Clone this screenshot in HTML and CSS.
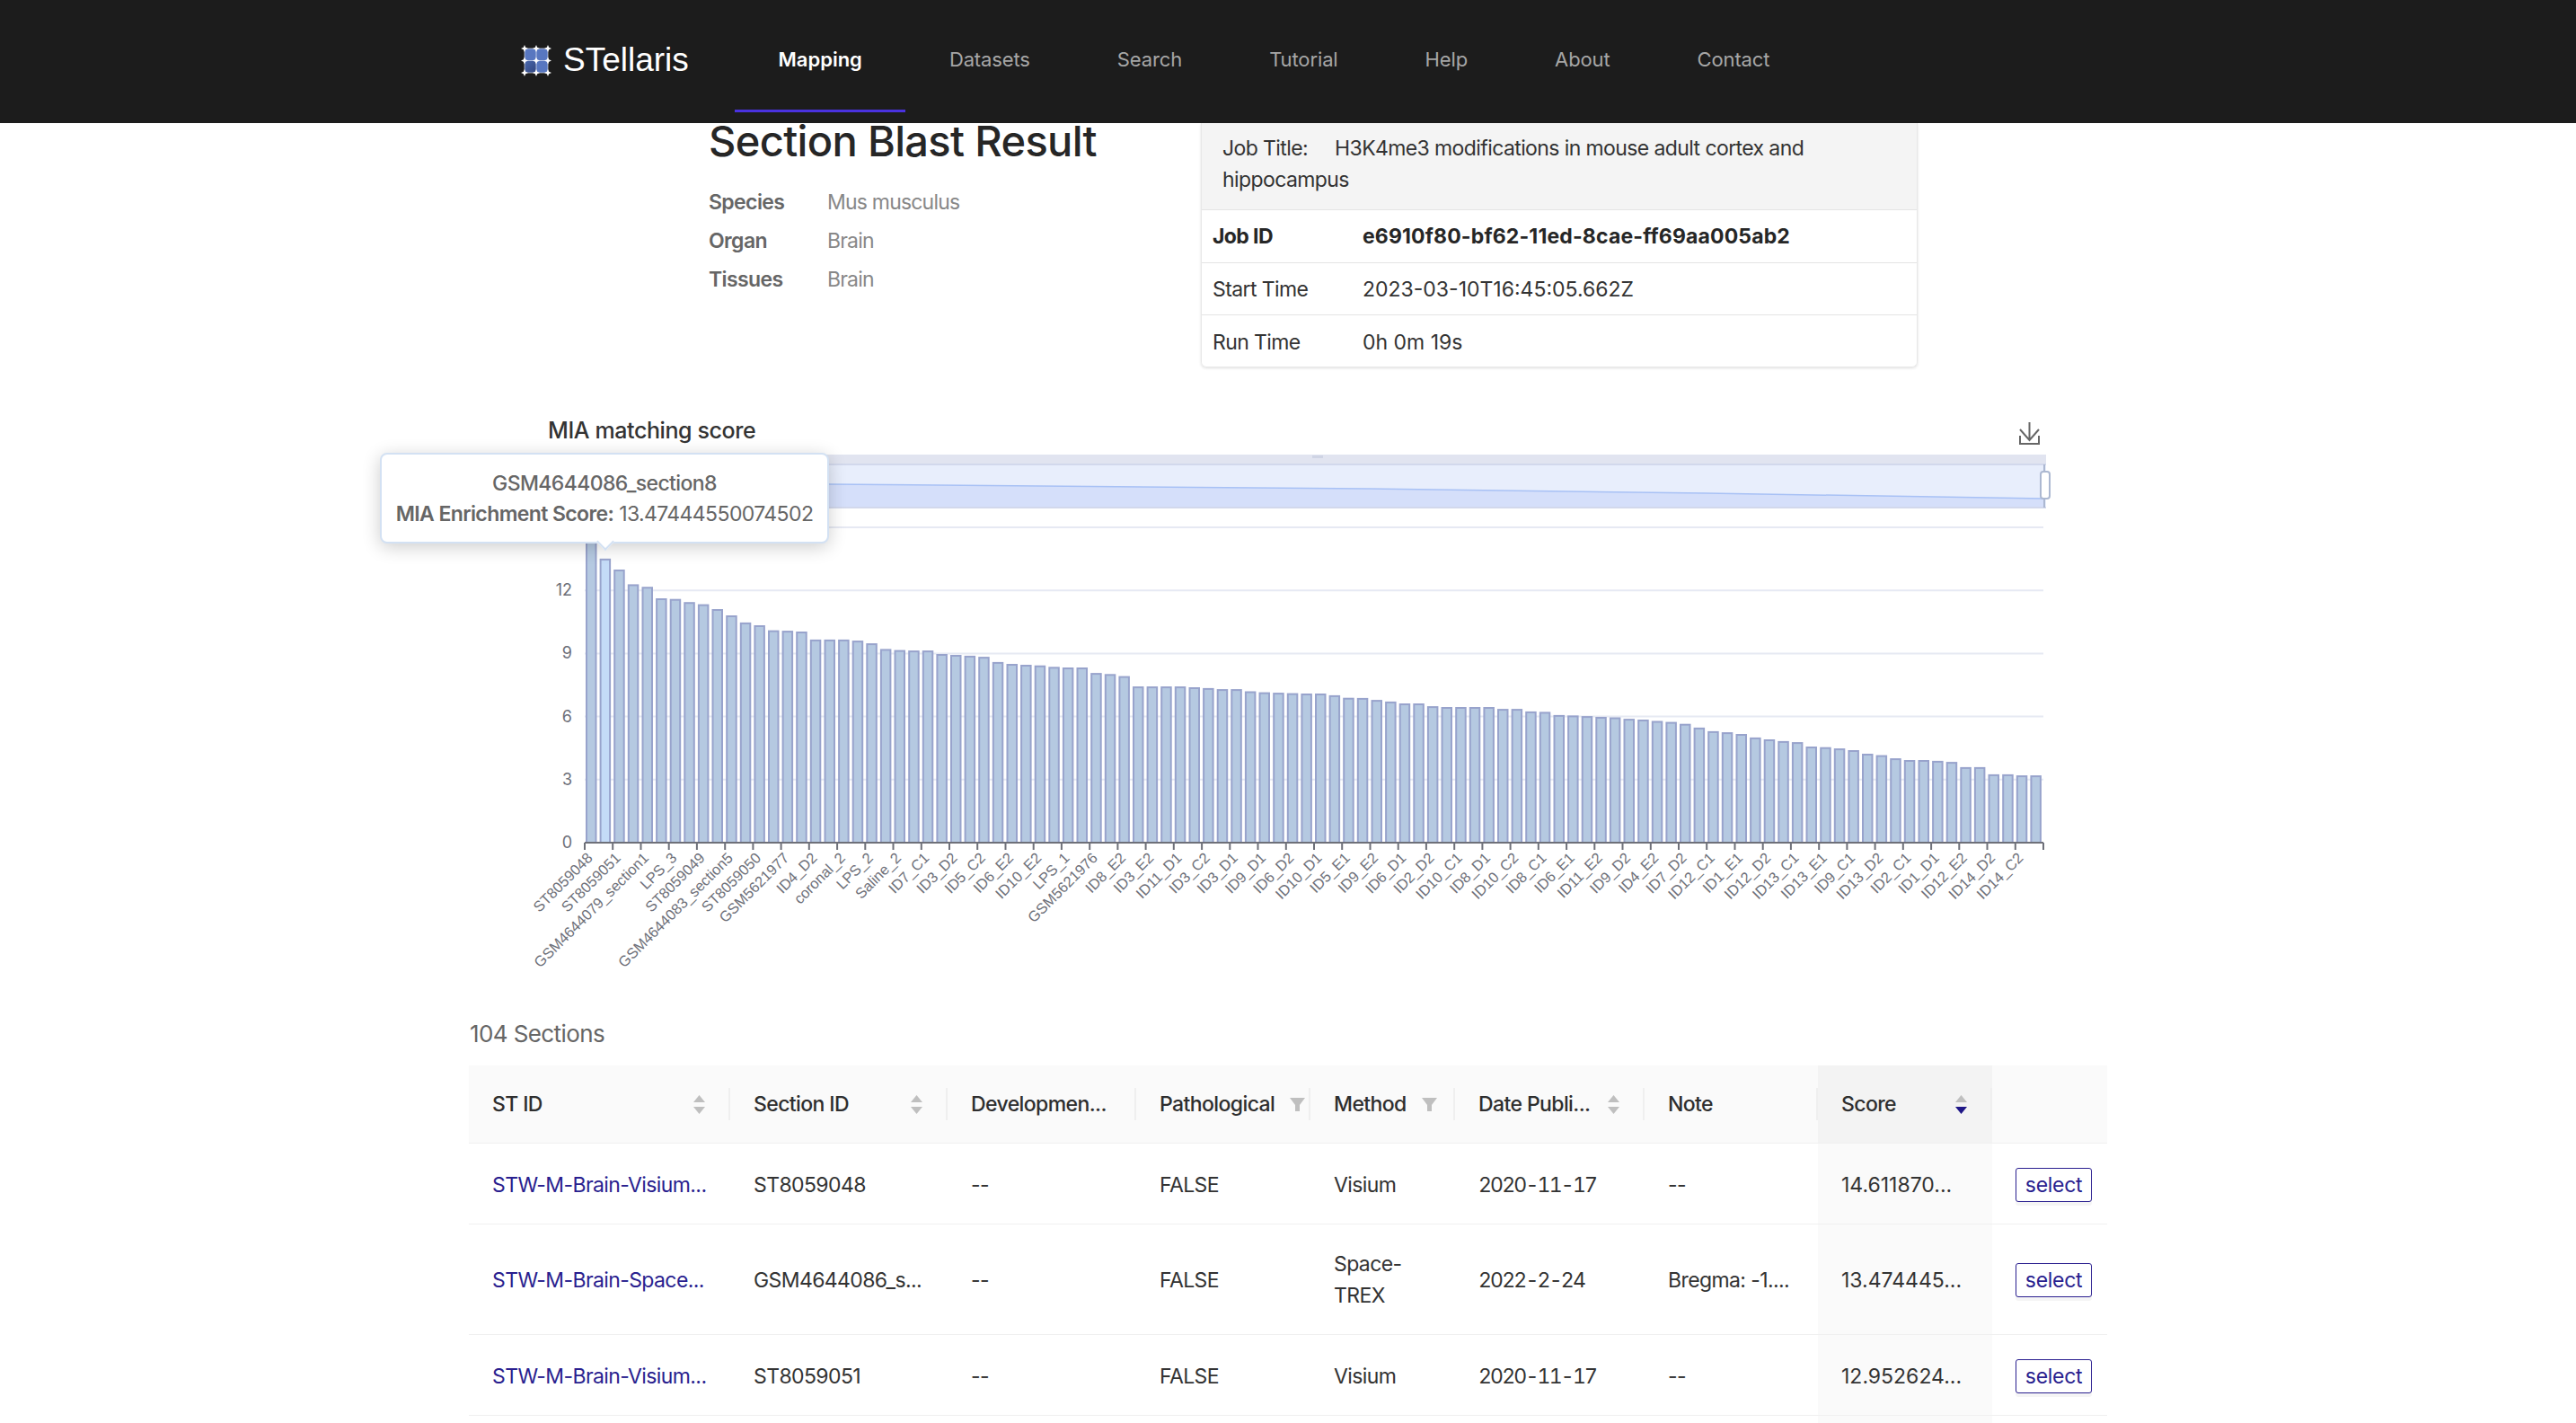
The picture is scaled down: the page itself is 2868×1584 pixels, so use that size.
FILE: index.html
```html
<!DOCTYPE html>
<html lang="en">
  <head>
    <meta charset="UTF-8" />
    <title>STellaris - Section Blast Result</title>
    <link rel="stylesheet" href="styles.css">
  </head>
  <body>
    <nav class="topbar">
      <a class="brand" href="#">
        <svg class="brand-logo" viewBox="0 0 36 36" width="36" height="36">
          <defs>
            <linearGradient id="logo-dark" x1="0" y1="0" x2="1" y2="1">
              <stop offset="0" stop-color="#4a68ad" />
              <stop offset="1" stop-color="#32467f" />
            </linearGradient>
          </defs>
          <rect class="logo-cell" x="5" y="5" width="26" height="27" />
          <rect x="5" y="18.5" width="13" height="13.5" fill="url(#logo-dark)" />
          <path class="logo-grid" d="M5 5H31M5 18.5H31M5 32H31M5 5V32M18 5V32M31 5V32" />
          <path class="logo-node" d="M5 1l1.2 2.8L9 5 6.2 6.2 5 9 3.8 6.2 1 5l2.8-1.2z" />
          <path class="logo-node" d="M18 1l1.2 2.8L22 5l-2.8 1.2L18 9l-1.2-2.8L14 5l2.8-1.2z" />
          <path class="logo-node" d="M31 1l1.2 2.8L35 5l-2.8 1.2L31 9l-1.2-2.8L27 5l2.8-1.2z" />
          <path class="logo-node" d="M5 14.5l1.2 2.8L9 18.5l-2.8 1.2L5 22.500l-1.200-2.800L1 18.500l2.800-1.200z" />
          <path class="logo-node" d="M18 14.500l1.200 2.800L22 18.500l-2.800 1.200L18 22.500l-1.200-2.800L14 18.500l2.800-1.200z" />
          <path class="logo-node" d="M31 14.500l1.200 2.800L35 18.500l-2.800 1.200L31 22.500l-1.200-2.800L27 18.500l2.800-1.200z" />
          <path class="logo-node" d="M5 28l1.200 2.800L9 32l-2.800 1.200L5 36l-1.200-2.800L1 32l2.800-1.200z" />
          <path class="logo-node" d="M18 28l1.200 2.800L22 32l-2.800 1.200L18 36l-1.200-2.800L14 32l2.800-1.200z" />
          <path class="logo-node" d="M31 28l1.200 2.800L35 32l-2.800 1.200L31 36l-1.200-2.800L27 32l2.800-1.200z" />
        </svg>
        <span class="brand-name">STellaris</span>
      </a>
      <ul class="menu">
        <li class="menu-item active">Mapping</li>
        <li class="menu-item">Datasets</li>
        <li class="menu-item">Search</li>
        <li class="menu-item">Tutorial</li>
        <li class="menu-item">Help</li>
        <li class="menu-item">About</li>
        <li class="menu-item">Contact</li>
      </ul>
    </nav>

    <main class="page">
      <section class="summary">
        <div class="summary-info">
          <h1>Section Blast Result</h1>
          <dl class="facts">
            <dt>Species</dt>
            <dd>Mus musculus</dd>
            <dt>Organ</dt>
            <dd>Brain</dd>
            <dt>Tissues</dt>
            <dd>Brain</dd>
          </dl>
        </div>
        <div class="job-card">
          <div class="job-head">
            <span class="job-head-label">Job Title:</span>H3K4me3 modifications in mouse adult cortex and hippocampus
          </div>
          <div class="job-row job-row-strong">
            <span class="job-label">Job ID</span>
            <span class="job-value">e6910f80-bf62-11ed-8cae-ff69aa005ab2</span>
          </div>
          <div class="job-row">
            <span class="job-label">Start Time</span>
            <span class="job-value">2023-03-10T16:45:05.662Z</span>
          </div>
          <div class="job-row">
            <span class="job-label">Run Time</span>
            <span class="job-value">0h 0m 19s</span>
          </div>
        </div>
      </section>

      <section class="chart">
        <svg id="score-chart" class="chart-svg" width="1824" height="660" viewBox="0 0 1824 660"></svg>
        <div class="chart-tooltip">
          <div class="tooltip-title">GSM4644086_section8</div>
          <div><span class="tooltip-key">MIA Enrichment Score:</span> 13.47444550074502</div>
        </div>
      </section>

      <p class="section-count">104 Sections</p>

      <div class="table-wrap">
        <table class="results">
          <colgroup>
            <col class="col-st" />
            <col class="col-section" />
            <col class="col-dev" />
            <col class="col-path" />
            <col class="col-method" />
            <col class="col-date" />
            <col class="col-note" />
            <col class="col-score" />
            <col class="col-action" />
          </colgroup>
          <thead>
            <tr>
              <th><div class="th-sort">ST ID<svg class="sorter" viewBox="0 0 13 21"><polygon points="6.500,0 13,8 0,8" /><polygon points="0,13 13,13 6.500,21" /></svg></div></th>
              <th><div class="th-sort">Section ID<svg class="sorter" viewBox="0 0 13 21"><polygon points="6.500,0 13,8 0,8" /><polygon points="0,13 13,13 6.500,21" /></svg></div></th>
              <th>Developmen...</th>
              <th><div class="th-filter">Pathological<svg class="funnel" viewBox="0 0 17 15"><polygon points="0,0 17,0 11,8 11,15 6,15 6,8" /></svg></div></th>
              <th><div class="th-filter">Method<svg class="funnel" viewBox="0 0 17 15"><polygon points="0,0 17,0 11,8 11,15 6,15 6,8" /></svg></div></th>
              <th><div class="th-sort">Date Publi...<svg class="sorter" viewBox="0 0 13 21"><polygon points="6.500,0 13,8 0,8" /><polygon points="0,13 13,13 6.500,21" /></svg></div></th>
              <th>Note</th>
              <th class="th-sorted"><div class="th-sort">Score<svg class="sorter" viewBox="0 0 13 21"><polygon points="6.500,0 13,8 0,8" /><polygon class="sorter-on" points="0,13 13,13 6.500,21" /></svg></div></th>
              <th class="th-last"></th>
            </tr>
          </thead>
          <tbody>
            <tr>
              <td><a href="#">STW-M-Brain-Visium...</a></td>
              <td>ST8059048</td>
              <td>--</td>
              <td>FALSE</td>
              <td>Visium</td>
              <td class="td-date">2020-11-17</td>
              <td>--</td>
              <td class="td-sorted">14.611870...</td>
              <td class="td-action"><button class="select-btn">select</button></td>
            </tr>
            <tr class="row-tall">
              <td><a href="#">STW-M-Brain-Space...</a></td>
              <td>GSM4644086_s...</td>
              <td>--</td>
              <td>FALSE</td>
              <td>Space-<br />TREX</td>
              <td class="td-date">2022-2-24</td>
              <td>Bregma: -1....</td>
              <td class="td-sorted">13.474445...</td>
              <td class="td-action"><button class="select-btn">select</button></td>
            </tr>
            <tr>
              <td><a href="#">STW-M-Brain-Visium...</a></td>
              <td>ST8059051</td>
              <td>--</td>
              <td>FALSE</td>
              <td>Visium</td>
              <td class="td-date">2020-11-17</td>
              <td>--</td>
              <td class="td-sorted">12.952624...</td>
              <td class="td-action"><button class="select-btn">select</button></td>
            </tr>
            <tr>
              <td colspan="7"></td>
              <td class="td-sorted"></td>
              <td></td>
            </tr>
          </tbody>
        </table>
      </div>
    </main>

    <script src="chart.js"></script>
  </body>
</html>
```

FILE: styles.css
```css
html,
body {
  height: 100%;
  overflow: hidden;
}

body {
  margin: 0;
  background-color: white;
  font-family: Inter, "Noto Sans", sans-serif;
  font-size: 23px;
  letter-spacing: -0.6px;
  color: #333;
}

/* top bar */
.topbar {
  height: 137px;
  background-color: #1c1c1c;
  display: flex;
  padding-left: 579px;
}

.brand {
  display: flex;
  align-items: center;
  gap: 12px;
  width: 239px;
  height: 134px;
  color: white;
  text-decoration: none;
}

.brand-name {
  font-family: "Liberation Sans", Arial, sans-serif;
  font-size: 37px;
  letter-spacing: 0;
}

.logo-cell {
  fill: #5877c0;
}

.logo-grid {
  fill: none;
  stroke: white;
  stroke-width: 0.6;
}

.logo-node {
  fill: white;
}

.menu {
  display: flex;
  list-style: none;
  margin: 0;
  padding: 0;
}

.menu-item {
  height: 125px;
  line-height: 132px;
  padding: 0 48.500px;
  font-size: 22px;
  letter-spacing: -0.12px;
  color: #a6a6a6;
  box-sizing: border-box;
}

.menu-item.active {
  color: white;
  font-weight: 600;
  letter-spacing: 0;
  border-bottom: 3px solid #4a32e0;
}

/* page body */
.page {
  width: 1824px;
  margin: 0 auto;
}

.summary {
  display: flex;
  padding-left: 267px;
  height: 273px;
}

.summary-info {
  width: 548px;
}

h1 {
  margin: 0 0 26px;
  font-size: 47px;
  line-height: 40px;
  font-weight: 500;
  letter-spacing: -0.65px;
  color: #262626;
}

.facts {
  display: grid;
  grid-template-columns: 132px 1fr;
  grid-auto-rows: 43px;
  align-items: center;
  margin: 0;
}

.facts dt {
  font-weight: 600;
  color: #666;
}

.facts dd {
  margin: 0;
  color: #888;
  letter-spacing: -0.8px;
}

.job-card {
  width: 798px;
  height: 272px;
  box-sizing: border-box;
  border: 1px solid #e8e8e8;
  border-top: none;
  border-radius: 0 0 6px 6px;
  box-shadow: 0 1px 3px rgba(0, 0, 0, 0.12);
}

.job-head {
  background-color: #f4f4f4;
  padding: 11px 24px 14px 23px;
  line-height: 35px;
  height: 71px;
}

.job-head-label {
  margin-right: 30px;
}

.job-row {
  display: flex;
  align-items: center;
  box-sizing: border-box;
  height: 58.670px;
  padding-left: 12px;
  padding-top: 1px;
  border-top: 1px solid #e4e4e4;
}

.job-row-strong {
  font-weight: 700;
  color: #262626;
}

.job-label {
  width: 167px;
}

.job-value {
  letter-spacing: 0;
}

.job-row-strong .job-value {
  letter-spacing: 0.15px;
}

/* chart */
.chart {
  position: relative;
  height: 660px;
  margin-top: 40px;
}

.chart-svg {
  display: block;
  overflow: visible;
}

.chart-title {
  font-size: 25px;
  font-weight: 500;
  letter-spacing: -0.4px;
  fill: #333;
}

.chart-download {
  fill: none;
  stroke: #666;
  stroke-width: 2;
}

.zoom-strip {
  fill: #e1e4f0;
}

.zoom-bg {
  fill: #e8eefc;
}

.zoom-area {
  fill: #d5dffa;
}

.zoom-line {
  fill: none;
  stroke: #a8c1f5;
  stroke-width: 1.500;
}

.zoom-edge {
  stroke: #d2d8ec;
  stroke-width: 2;
}

.zoom-bar {
  stroke: #acb8d1;
  stroke-width: 2;
}

.zoom-handle {
  fill: white;
  stroke: #acb8d1;
  stroke-width: 2;
}

.zoom-grip {
  fill: #cfd4e4;
}

.grid-line {
  stroke: #e6e9f3;
  stroke-width: 2;
}

.axis-line {
  stroke: #6e7079;
  stroke-width: 2;
}

.axis-y {
  font-size: 18px;
  letter-spacing: 0;
  fill: #6e7079;
  text-anchor: end;
}

.axis-x {
  font-family: "Liberation Sans", Arial, sans-serif;
  font-size: 16.500px;
  letter-spacing: 0;
  fill: #6e7079;
  text-anchor: end;
}

.bar {
  fill: #b5c9e1;
  stroke: #98a3cc;
  stroke-width: 2;
}

.bar-hover {
  fill: #c4dbf7;
}

.chart-tooltip {
  position: absolute;
  left: -99px;
  top: 54px;
  width: 500px;
  height: 101px;
  box-sizing: border-box;
  padding-top: 15px;
  background-color: white;
  border: 2px solid #d3e1f3;
  border-radius: 8px;
  box-shadow: 0 4px 20px rgba(0, 0, 0, 0.2);
  text-align: center;
  font-size: 23px;
  line-height: 34px;
  color: #666;
  white-space: nowrap;
}

.chart-tooltip::after {
  content: "";
  position: absolute;
  left: 242px;
  bottom: -7px;
  width: 12px;
  height: 12px;
  background-color: white;
  border-right: 2px solid #d3e1f3;
  border-bottom: 2px solid #d3e1f3;
  transform: rotate(45deg);
}

.tooltip-title {
  font-weight: 500;
}

.tooltip-key {
  font-weight: 600;
}

/* table */
.section-count {
  margin: 24px 0 18px;
  padding-left: 1px;
  font-size: 26px;
  line-height: 34px;
  color: #666;
}

/* the list goes on below the fold */
.table-wrap {
  height: 398px;
  overflow: hidden;
}

.results {
  width: 1824px;
  table-layout: fixed;
  border-collapse: separate;
  border-spacing: 0;
  line-height: 35px;
}

.col-st { width: 291px; }
.col-section { width: 242px; }
.col-dev { width: 210px; }
.col-path { width: 194px; }
.col-method { width: 161px; }
.col-date { width: 211px; }
.col-note { width: 193px; }
.col-score { width: 194px; }
.col-action { width: 128px; }

.results th {
  position: relative;
  height: 86px;
  padding: 1px 0 0 26px;
  box-sizing: border-box;
  background-color: #fafafa;
  border-bottom: 1px solid #f0f0f0;
  text-align: left;
  font-weight: 500;
  color: #2e2e2e;
  white-space: nowrap;
}

.results thead tr {
  height: 87px;
}

.results th:not(.th-last)::before {
  content: "";
  position: absolute;
  right: 0;
  top: 25px;
  height: 36px;
  width: 2px;
  background-color: #efefef;
}

.results th.th-sorted {
  background-color: #f3f3f3;
}

.th-sort {
  display: flex;
  align-items: center;
  justify-content: space-between;
  padding-right: 28px;
}

.th-filter {
  display: flex;
  align-items: center;
  gap: 17px;
}

.sorter {
  width: 13px;
  height: 21px;
  fill: #bfbfbf;
}

.sorter-on {
  fill: #1f1787;
}

.funnel {
  width: 17px;
  height: 15px;
  fill: #bfbfbf;
}

.results td {
  box-sizing: border-box;
  height: 90px;
  padding: 4px 0 0 26px;
  border-bottom: 1px solid #f0f0f0;
  white-space: nowrap;
}

.results .row-tall td {
  height: 123px;
  padding-top: 2px;
}

.results .td-action,
.results .row-tall .td-action {
  padding-top: 2px;
}

.results .td-date {
  font-variant-numeric: tabular-nums;
  letter-spacing: -1.800px;
}

.results .td-sorted {
  background-color: #fafafa;
  letter-spacing: 0;
}

.results a {
  color: #2a1f8f;
  text-decoration: none;
}

.select-btn {
  display: block;
  width: 85px;
  height: 38px;
  padding: 0;
  background-color: white;
  border: 1.500px solid #2a1f8f;
  border-radius: 3px;
  box-shadow: 0 4px 0 rgba(0, 0, 0, 0.04);
  font-family: inherit;
  font-size: 23px;
  letter-spacing: -0.3px;
  color: #2a1f8f;
  cursor: pointer;
}
```

FILE: chart.js
```js
const scores = [
  14.61, 13.47, 12.95, 12.25, 12.13, 11.58, 11.55, 11.4, 11.3, 11.07, 10.77,
  10.43, 10.3, 10.06, 10.04, 10.0, 9.62, 9.62, 9.62, 9.57, 9.44, 9.17, 9.12,
  9.1, 9.1, 8.93, 8.89, 8.85, 8.8, 8.55, 8.46, 8.42, 8.39, 8.32, 8.29, 8.29,
  8.03, 7.98, 7.88, 7.39, 7.39, 7.39, 7.39, 7.35, 7.31, 7.26, 7.26, 7.16, 7.11,
  7.09, 7.07, 7.05, 7.05, 6.97, 6.85, 6.84, 6.75, 6.67, 6.58, 6.58, 6.45, 6.41,
  6.41, 6.41, 6.41, 6.32, 6.32, 6.2, 6.18, 6.03, 6.01, 5.98, 5.94, 5.92, 5.85,
  5.81, 5.75, 5.7, 5.61, 5.43, 5.26, 5.21, 5.13, 4.96, 4.87, 4.79, 4.74, 4.53,
  4.5, 4.44, 4.36, 4.19, 4.12, 3.97, 3.89, 3.89, 3.85, 3.8, 3.55, 3.55, 3.21,
  3.21, 3.16, 3.16,
];

// only every second section gets a label on the axis
const labels = [
  "ST8059048", "ST8059051", "GSM4644079_section1", "LPS_3", "ST8059049",
  "GSM4644083_section5", "ST8059050", "GSM5621977", "ID4_D2", "coronal_2",
  "LPS_2", "Saline_2", "ID7_C1", "ID3_D2", "ID5_C2", "ID6_E2", "ID10_E2",
  "LPS_1", "GSM5621976", "ID8_E2", "ID3_E2", "ID11_D1", "ID3_C2", "ID3_D1",
  "ID9_D1", "ID6_D2", "ID10_D1", "ID5_E1", "ID9_E2", "ID6_D1", "ID2_D2",
  "ID10_C1", "ID8_D1", "ID10_C2", "ID8_C1", "ID6_E1", "ID11_E2", "ID9_D2",
  "ID4_E2", "ID7_D2", "ID12_C1", "ID1_E1", "ID12_D2", "ID13_C1", "ID13_E1",
  "ID9_C1", "ID13_D2", "ID2_C1", "ID1_D1", "ID12_E2", "ID14_D2", "ID14_C2",
];

const gridLeft = 129;
const gridRight = 1753;
const baseY = 488;
const perUnit = 23.4;
const band = (gridRight - gridLeft) / scores.length;

function buildChart() {
  let out = "";

  out += `<text class="chart-title" x="88" y="38">MIA matching score</text>`;
  out += `<path class="chart-download" d="M1737.500 20V40M1727 28L1737.500 40L1748 28M1727 35V44H1748V35" />`;

  // data zoom on top of the plot
  out += `<rect class="zoom-strip" x="${gridLeft}" y="56" width="${gridRight - gridLeft + 3}" height="11" />`;
  out += `<rect class="zoom-bg" x="${gridLeft}" y="67" width="${gridRight - gridLeft + 3}" height="48" />`;
  out += `<polygon class="zoom-area" points="${gridLeft},88 401,89 1000,94 1378,99 1754,105 1754,115 ${gridLeft},115" />`;
  out += `<polyline class="zoom-line" points="${gridLeft},88 401,89 1000,94 1378,99 1754,105" />`;
  out += `<line class="zoom-edge" x1="${gridLeft}" y1="67" x2="1756" y2="67" />`;
  out += `<line class="zoom-edge" x1="${gridLeft}" y1="115" x2="1756" y2="115" />`;
  out += `<rect class="zoom-grip" x="939" y="57" width="12" height="3" />`;
  out += `<line class="zoom-bar" x1="1754" y1="67" x2="1754" y2="115" />`;
  out += `<rect class="zoom-handle" x="1750" y="75" width="10" height="30" rx="3" />`;

  // value axis
  [0, 3, 6, 9, 12, 15].forEach(function (v) {
    const y = baseY - v * perUnit;
    if (v > 0) {
      out += `<line class="grid-line" x1="${gridLeft}" y1="${y}" x2="${gridRight}" y2="${y}" />`;
    }
    out += `<text class="axis-y" x="115" y="${y + 6}">${v}</text>`;
  });

  scores.forEach(function (score, i) {
    const x = gridLeft + i * band + 2;
    const h = score * perUnit;
    const cls = i === 1 ? "bar bar-hover" : "bar";
    out += `<rect class="${cls}" x="${x.toFixed(1)}" y="${(baseY - h).toFixed(1)}" width="10.500" height="${h.toFixed(1)}" />`;
  });

  // category axis
  out += `<line class="axis-line" x1="${gridLeft}" y1="${baseY}" x2="${gridRight}" y2="${baseY}" />`;
  for (let i = 0; i <= scores.length; i += 2) {
    const x = gridLeft + i * band;
    out += `<line class="axis-line" x1="${x.toFixed(1)}" y1="${baseY}" x2="${x.toFixed(1)}" y2="${baseY + 8}" />`;
  }
  labels.forEach(function (name, n) {
    const x = gridLeft + (n * 2 + 0.5) * band + 2;
    out += `<text class="axis-x" transform="translate(${x.toFixed(1)} 506) rotate(-45)">${name}</text>`;
  });

  document.getElementById("score-chart").innerHTML = out;
}

buildChart();
```
